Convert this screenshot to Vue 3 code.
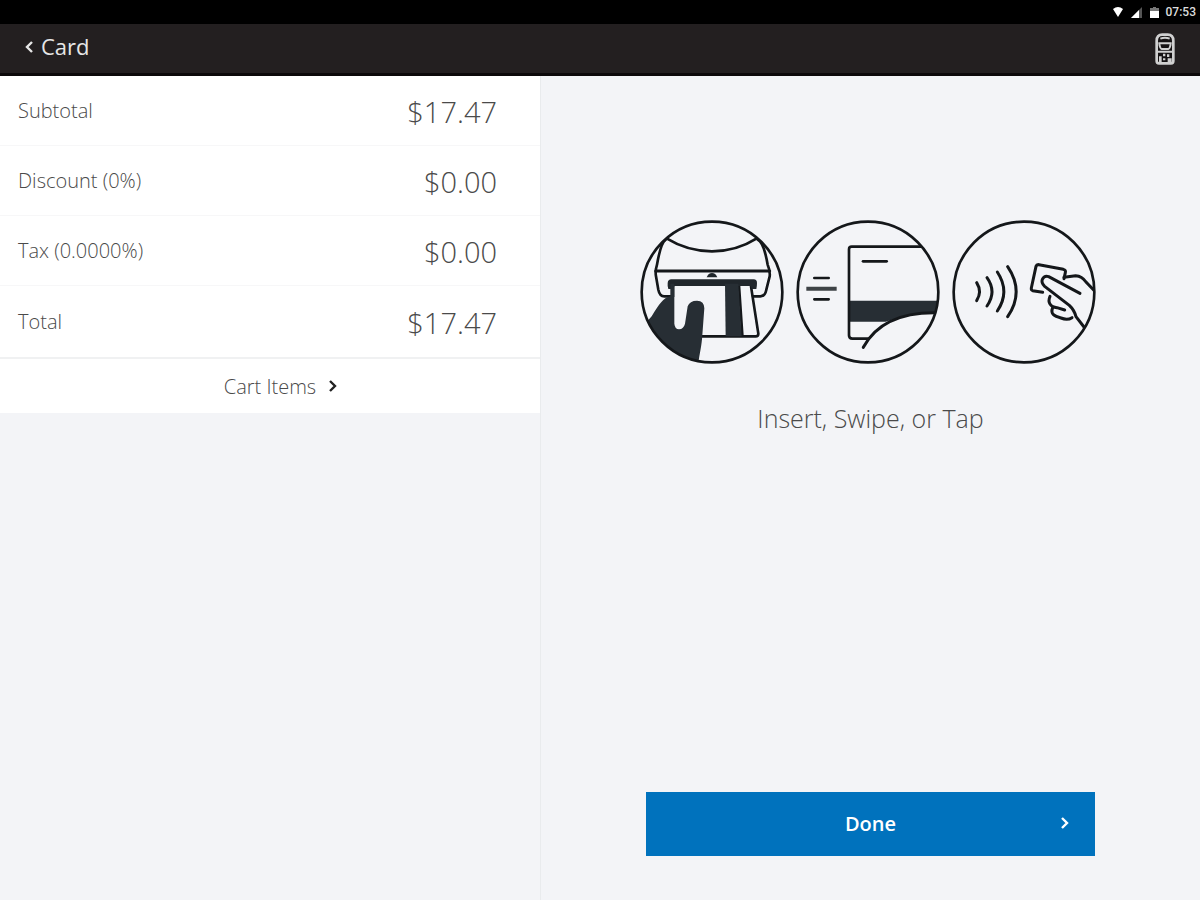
<script setup>
const lines = [
  { label: 'Subtotal', amount: '$17.47' },
  { label: 'Discount (0%)', amount: '$0.00' },
  { label: 'Tax (0.0000%)', amount: '$0.00' },
  { label: 'Total', amount: '$17.47' },
]
</script>

<template>
  <div class="screen">
    <div class="status">
      <svg class="wifi" viewBox="0 0 12 10" aria-hidden="true"><path d="M1 2Q6-2 11 2L6 10Z" fill="#fff" /></svg>
      <svg class="signal" viewBox="0 0 11 11" aria-hidden="true">
        <path d="M0 11L11 0V11Z" fill="#555" /><path d="M0 11L8 3V11Z" fill="#fff" />
      </svg>
      <svg class="battery" viewBox="0 0 9 11" aria-hidden="true">
        <path d="M0 1H3V0H6V1H9V11H0Z" fill="#777" /><path d="M0 4H9V11H0Z" fill="#fff" />
      </svg>
      <time>07:53</time>
    </div>

    <header class="bar">
      <button class="back" type="button">
        <svg viewBox="0 0 10 14" aria-hidden="true"><path d="M8 2L3 7L8 12" /></svg>
        <span>Card</span>
      </button>
      <button class="reader" type="button" aria-label="Card reader">
        <svg viewBox="0 0 60 96" aria-hidden="true">
          <path d="M5 84V24Q5 5 22 5H38Q55 5 55 24V84Q55 91 48 91H12Q5 91 5 84Z" fill="#151213" stroke="#d0d0d0" stroke-width="8" />
          <path d="M16 17Q30 11 44 17M10 31H50M13 34Q16 48 20 48H40Q44 48 47 34M9 56H51" fill="none" stroke="#d0d0d0" stroke-width="6" />
          <path d="M12 70H20V88H12ZM24 62H31V70H24ZM24 76H31V82H24ZM36 64H43V72H36ZM38 76H50V88H38Z" fill="#d0d0d0" />
        </svg>
      </button>
    </header>

    <main class="content">
      <section class="summary">
        <dl class="lines">
          <div v-for="line in lines" :key="line.label" class="line">
            <dt>{{ line.label }}</dt>
            <dd>{{ line.amount }}</dd>
          </div>
        </dl>
        <button class="cart" type="button">
          <span>Cart Items</span>
          <svg viewBox="0 0 10 14" aria-hidden="true"><path d="M2 2L7 7L2 12" /></svg>
        </button>
      </section>

      <section class="payment">
        <div class="methods">
          <svg viewBox="31 31 432 432" role="img" aria-label="Insert card">
            <defs><clipPath id="insert-clip"><circle cx="247" cy="247" r="212" /></clipPath></defs>
            <g clip-path="url(#insert-clip)">
              <g class="ink">
                <path d="M112 87Q174 125 247 125Q320 125 380 87" />
                <path d="M108 90C96 98 88 130 82 165Q76 184 79 200L86 240Q90 260 104 260H124" />
                <path d="M384 90C400 98 408 130 414 165Q422 184 420 200L410 240Q406 260 392 260H370" />
                <path d="M78 184H420" stroke-width="9" />
                <path d="M364 230L386 372Q386 380 378 380H210" />
                <path d="M328 228L338 376" />
                <path d="M130 228V260" />
              </g>
              <path d="M231 203Q236 190 247 190Q258 190 263 203Z" fill="#20262b" />
              <path d="M125 209H372Q382 209 382 220Q382 229 380 238H366L362 229H135L128 238H116Q113 230 114 220Q115 209 125 209Z" fill="#20262b" />
              <path d="M286 222H326L336 380H288Z" fill="#272e34" />
              <path d="M134 222V342Q136 359 148 359Q162 358 166 342L174 290Q180 273 202 273Q224 274 224 296L218 376C216 410 210 430 206 460H90L40 350L66 320C90 282 100 265 122 260V222Z" fill="#272e34" />
            </g>
            <circle class="ring" cx="247" cy="247" r="211" />
          </svg>

          <svg viewBox="35 30 432 432" role="img" aria-label="Swipe card">
            <defs><clipPath id="swipe-clip"><circle cx="251" cy="246" r="212" /></clipPath></defs>
            <g clip-path="url(#swipe-clip)">
              <path d="M196 272H480V307C400 306 350 322 304 335H196Z" fill="#272e34" />
              <g class="ink">
                <path d="M420 110H202Q194 110 194 118V376Q194 386 204 386H252" />
                <path d="M237 412C275 342 350 304 470 309" stroke-width="9" />
                <path d="M236 154H307" />
                <path d="M90 204H133M90 268H133" />
              </g>
              <path d="M66 236H157" stroke="#3e4346" stroke-width="12" />
            </g>
            <circle class="ring" cx="251" cy="246" r="211" />
          </svg>

          <svg viewBox="30 31 432 432" role="img" aria-label="Tap card">
            <defs><clipPath id="tap-clip"><circle cx="246" cy="247" r="212" /></clipPath></defs>
            <g clip-path="url(#tap-clip)" class="ink tap">
              <path d="M104 219Q121 246 104 273" />
              <path d="M135 204Q165 246 135 289" />
              <path d="M166 187Q205 246 166 304" />
              <path d="M197 171Q248 246 197 321" />
              <path d="M302 248L272 243Q267 241 268 235L282 170Q284 164 291 165L364 179Q372 181 370 189L366 207" />
              <path d="M414 251L320 201Q307 197 301 209Q297 220 308 230L382 287Q397 301 402 321L426 352" />
              <path d="M366 203L401 198Q420 199 432 217L460 246" />
              <path d="M324 260C316 278 325 292 345 294L368 301" />
              <path d="M332 294C324 314 338 320 357 325Q376 333 390 324" />
            </g>
            <circle class="ring" cx="246" cy="247" r="211" />
          </svg>
        </div>
        <p class="prompt">Insert, Swipe, or Tap</p>
        <button class="done" type="button">
          <span>Done</span>
          <svg viewBox="0 0 10 14" aria-hidden="true"><path d="M2 2L7 7L2 12" /></svg>
        </button>
      </section>
    </main>
  </div>
</template>

<style>
body { margin: 0; background: #f3f4f7; }
</style>

<style scoped>
.screen {
  min-height: 100vh;
  display: flex;
  flex-direction: column;
  background: #f3f4f7;
  color: #4a4a4a;
  font-family: "Open Sans", "Noto Sans", sans-serif;
  font-weight: 300;
}
button { margin: 0; border: 0; padding: 0; background: none; color: inherit; font: inherit; cursor: pointer; }
button svg { display: block; }
.status {
  height: 24px;
  display: flex;
  align-items: center;
  justify-content: flex-end;
  padding-right: 4px;
  background: #000;
  color: #ddd;
}
.wifi { width: 12px; height: 10px; margin-right: 7px; }
.signal { width: 11px; height: 11px; margin-right: 8px; }
.battery { width: 9px; height: 11px; margin-right: 7px; }
.status time { font: 500 12px/24px Roboto, sans-serif; }
.bar {
  height: 52px;
  box-sizing: border-box;
  display: flex;
  align-items: center;
  justify-content: space-between;
  padding: 0 25px 0 24px;
  background: #231f20;
  border-bottom: 3px solid #0c090a;
  color: #e6e6e6;
}
.back { display: flex; align-items: center; gap: 7px; font-size: 22px; line-height: 30px; padding-bottom: 6px; font-weight: 400; }
.back svg { width: 10px; height: 14px; margin-top: 2px; }
.back path, .cart path, .done path { fill: none; stroke: currentColor; stroke-width: 2.4; }
.reader svg { width: 20px; height: 32px; }
.content { flex: 1; display: flex; }
.summary { width: 45%; }
.lines { margin: 0; background: #fff; }
.line {
  height: 70px;
  display: flex;
  align-items: center;
  justify-content: space-between;
  padding: 0 43px 0 18px;
  border-bottom: 1px solid #f7f7f8;
  box-sizing: border-box;
}
.line:last-child { height: 73px; border-bottom: 2px solid #f0f1f2; }
.line dt { font-size: 20px; line-height: 28px; }
.line dd { margin: 0; padding-top: 2px; font-size: 29px; line-height: 40px; }
.cart {
  width: 100%;
  height: 54px;
  display: flex;
  align-items: center;
  justify-content: center;
  gap: 12px;
  padding-left: 22px;
  background: #fff;
  font-size: 20px;
}
.cart svg { width: 10px; height: 14px; color: #222; }
.payment {
  flex: 1;
  display: flex;
  flex-direction: column;
  align-items: center;
  padding: 144px 0 44px;
  border-left: 1px solid #e9ebed;
}
.methods { display: flex; gap: 12px; margin-right: 6px; }
.methods svg { width: 144px; height: 144px; }
.ring { fill: none; stroke: #14171a; stroke-width: 8; }
.ink { fill: none; stroke: #14171a; stroke-width: 8; stroke-linecap: round; stroke-linejoin: round; }
.tap { stroke-width: 9; }
.prompt { margin: 36px 0 0; font-size: 25px; line-height: 36px; }
.done {
  width: 68%;
  height: 64px;
  margin-top: auto;
  display: grid;
  grid-template-columns: 1fr auto 1fr;
  align-items: center;
  padding: 0 25px 2px;
  background: #0072bd;
  color: #fff;
  font-size: 20px;
  font-weight: 600;
}
.done span { grid-column: 2; }
.done svg { width: 10px; height: 14px; justify-self: end; }
</style>
